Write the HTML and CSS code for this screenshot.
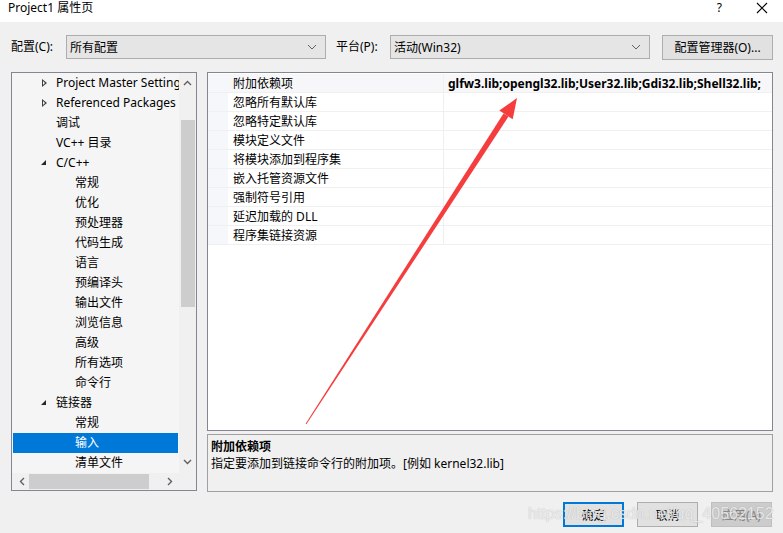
FILE: index.html
```html
<!DOCTYPE html>
<html lang="zh-CN">
<head>
    <meta charset="UTF-8">
    <title>Project1 属性页</title>
    <link rel="stylesheet" href="styles.css">
</head>
<body>
<div class="window">
    <div class="titlebar">
        <div class="title">Project1 属性页</div>
        <div class="title-buttons">
            <span class="help">?</span>
            <svg class="close" width="12" height="12" viewBox="0 0 12 12">
                <path d="M1 1 L11 11 M11 1 L1 11" stroke="#000" stroke-width="1.1" fill="none"/>
            </svg>
        </div>
    </div>

    <div class="toolbar">
        <label class="label label-config">配置(C):</label>
        <div class="select">
            <span>所有配置</span>
            <svg class="chevron" width="10" height="6" viewBox="0 0 10 6"><path d="M1 1 L5 5 L9 1" stroke="#606060" fill="none"/></svg>
        </div>
        <label class="label label-platform">平台(P):</label>
        <div class="select">
            <span>活动(Win32)</span>
            <svg class="chevron" width="10" height="6" viewBox="0 0 10 6"><path d="M1 1 L5 5 L9 1" stroke="#606060" fill="none"/></svg>
        </div>
        <div class="button manager">配置管理器(O)...</div>
    </div>

    <div class="main">
        <div class="tree">
            <div class="tree-body">
                <div class="tree-items">
                    <div class="node lvl1"><span class="twist closed"></span>Project Master Settings</div>
                    <div class="node lvl1"><span class="twist closed"></span>Referenced Packages</div>
                    <div class="node lvl1">调试</div>
                    <div class="node lvl1">VC++ 目录</div>
                    <div class="node lvl1"><span class="twist open"></span>C/C++</div>
                    <div class="node lvl2">常规</div>
                    <div class="node lvl2">优化</div>
                    <div class="node lvl2">预处理器</div>
                    <div class="node lvl2">代码生成</div>
                    <div class="node lvl2">语言</div>
                    <div class="node lvl2">预编译头</div>
                    <div class="node lvl2">输出文件</div>
                    <div class="node lvl2">浏览信息</div>
                    <div class="node lvl2">高级</div>
                    <div class="node lvl2">所有选项</div>
                    <div class="node lvl2">命令行</div>
                    <div class="node lvl1"><span class="twist open"></span>链接器</div>
                    <div class="node lvl2">常规</div>
                    <div class="node lvl2 selected">输入</div>
                    <div class="node lvl2">清单文件</div>
                </div>
                <div class="vscroll">
                    <svg class="arrow-up" width="9" height="6" viewBox="0 0 9 6"><path d="M1 5 L4.5 1.5 L8 5" stroke="#606060" stroke-width="1.4" fill="none"/></svg>
                    <div class="vthumb"></div>
                    <svg class="arrow-down" width="9" height="6" viewBox="0 0 9 6"><path d="M1 1 L4.5 4.5 L8 1" stroke="#606060" stroke-width="1.4" fill="none"/></svg>
                </div>
            </div>
            <div class="hscroll-row">
                <div class="hscroll">
                    <svg class="arrow-left" width="6" height="9" viewBox="0 0 6 9"><path d="M5 1 L1.5 4.5 L5 8" stroke="#606060" stroke-width="1.4" fill="none"/></svg>
                    <div class="hthumb"></div>
                    <svg class="arrow-right" width="6" height="9" viewBox="0 0 6 9"><path d="M1 1 L4.5 4.5 L1 8" stroke="#606060" stroke-width="1.4" fill="none"/></svg>
                </div>
                <div class="corner"></div>
            </div>
        </div>

        <div class="right">
            <div class="grid">
                <div class="prop current"><div class="gutter"></div><div class="name">附加依赖项</div><div class="value">glfw3.lib;opengl32.lib;User32.lib;Gdi32.lib;Shell32.lib;</div></div>
                <div class="prop"><div class="gutter"></div><div class="name">忽略所有默认库</div><div class="value"></div></div>
                <div class="prop"><div class="gutter"></div><div class="name">忽略特定默认库</div><div class="value"></div></div>
                <div class="prop"><div class="gutter"></div><div class="name">模块定义文件</div><div class="value"></div></div>
                <div class="prop"><div class="gutter"></div><div class="name">将模块添加到程序集</div><div class="value"></div></div>
                <div class="prop"><div class="gutter"></div><div class="name">嵌入托管资源文件</div><div class="value"></div></div>
                <div class="prop"><div class="gutter"></div><div class="name">强制符号引用</div><div class="value"></div></div>
                <div class="prop"><div class="gutter"></div><div class="name">延迟加载的 DLL</div><div class="value"></div></div>
                <div class="prop"><div class="gutter"></div><div class="name">程序集链接资源</div><div class="value"></div></div>
            </div>
            <div class="desc">
                <div class="desc-title">附加依赖项</div>
                <div class="desc-text">指定要添加到链接命令行的附加项。[例如 kernel32.lib]</div>
            </div>
        </div>
    </div>

    <div class="footer">
        <div class="button ok">确定</div>
        <div class="button">取消</div>
        <div class="button disabled">应用(A)</div>
    </div>

    <!-- 截图上的红色标注箭头 -->
    <svg class="annotation" width="783" height="533" viewBox="0 0 783 533">
        <polygon points="306.4,424.3 305.6,423.7 503.5,113.4 508.5,116.6" fill="#f53d3d"/>
        <polygon points="517,98 499.3,110.6 512.7,119.3" fill="#f53d3d"/>
    </svg>
    <div class="watermark">https://blog.csdn.net/qq_40562152</div>
</div>
</body>
</html>
```

FILE: styles.css
```css
* {
    margin: 0;
    padding: 0;
    box-sizing: border-box;
}

body {
    background: #f0f0f0;
    font-family: "Noto Sans", "Noto Sans CJK SC", sans-serif;
    font-size: 12px;
    color: #000;
}

.window {
    position: relative;
    width: 783px;
    height: 533px;
    overflow: hidden;
}

.titlebar {
    height: 22px;
    background: #ffffff;
    display: flex;
    justify-content: space-between;
    line-height: 16px;
}

.title {
    padding-left: 8px;
    font-size: 12px;
}

.title-buttons {
    display: flex;
    align-items: flex-start;
    padding-right: 15px;
}

.help {
    margin-right: 34px;
    font-size: 12px;
}

.close {
    margin-top: 2px;
}

.toolbar {
    height: 50px;
    display: flex;
    align-items: center;
    padding-left: 11px;
}

.label {
    line-height: 24px;
}

.label-config {
    width: 55px;
}

.label-platform {
    width: 54px;
    margin-left: 10px;
}

.select {
    width: 260px;
    height: 24px;
    border: 1px solid #adadad;
    background: #e5e5e5;
    display: flex;
    align-items: center;
    justify-content: space-between;
    padding: 0 8px 0 3px;
}

.button {
    height: 25px;
    border: 1px solid #adadad;
    background: #e1e1e1;
    display: flex;
    align-items: center;
    justify-content: center;
}

.manager {
    width: 111px;
    margin-left: 12px;
}

.main {
    display: flex;
    padding-left: 11px;
    height: 420px;
}

.tree {
    width: 186px;
    height: 419px;
    border: 1px solid #828790;
    display: flex;
    flex-direction: column;
    background: #f0f0f0;
}

.tree-body {
    flex: 1;
    display: flex;
    overflow: hidden;
}

.tree-items {
    width: 167px;
    background: #f5f5f5;
    overflow: hidden;
}

.node {
    height: 20px;
    line-height: 20px;
    white-space: nowrap;
    overflow: hidden;
    position: relative;
}

.lvl1 {
    padding-left: 44px;
}

.lvl2 {
    padding-left: 63px;
}

.node.selected {
    background: #0078d7;
    color: #ffffff;
    margin-left: 1px;
    width: 165px;
    padding-left: 62px;
}

.twist {
    position: absolute;
    left: 30px;
    top: 6px;
    width: 0;
    height: 0;
}

.twist.closed {
    border-top: 4px solid transparent;
    border-bottom: 4px solid transparent;
    border-left: 5px solid #404040;
}

.twist.closed::after {
    content: "";
    position: absolute;
    left: -4px;
    top: -2px;
    border-top: 2px solid transparent;
    border-bottom: 2px solid transparent;
    border-left: 2.5px solid #f5f5f5;
}

.twist.open {
    top: 7px;
    left: 29px;
    border-left: 5px solid transparent;
    border-bottom: 5px solid #262626;
}

.vscroll {
    width: 17px;
    display: flex;
    flex-direction: column;
    align-items: center;
    background: #f0f0f0;
}

.arrow-up {
    margin-top: 7px;
}

.vthumb {
    width: 14px;
    height: 187px;
    background: #cdcdcd;
    margin-top: 34px;
}

.arrow-down {
    margin-top: 152px;
}

.hscroll-row {
    height: 17px;
    display: flex;
}

.hscroll {
    width: 167px;
    display: flex;
    align-items: center;
    padding-left: 7px;
}

.hthumb {
    width: 120px;
    height: 15px;
    background: #cdcdcd;
    margin-left: 4px;
}

.arrow-right {
    margin-left: 18px;
}

.corner {
    flex: 1;
}

.right {
    margin-left: 10px;
    width: 566px;
    display: flex;
    flex-direction: column;
}

.grid {
    height: 359px;
    border: 1px solid #828790;
    background: #ffffff;
    padding-top: 1px;
    display: flex;
    flex-direction: column;
}

.prop {
    height: 19px;
    display: flex;
    line-height: 18px;
    padding-top: 1px;
    border-bottom: 1px solid #f0f0f0;
}

.prop:first-child {
    padding-top: 0;
    line-height: 19px;
}

.gutter {
    width: 20px;
    background: #f5f7fa;
    margin-top: -1px;
}

.prop:first-child .gutter {
    margin-top: 0;
}

.name {
    width: 215px;
    padding-left: 5px;
    white-space: nowrap;
}

.value {
    flex: 1;
    padding-left: 4px;
    border-left: 1px solid #f0f0f0;
    margin-top: -1px;
    padding-top: 1px;
    font-weight: bold;
    white-space: nowrap;
    overflow: hidden;
}

.prop:first-child .value {
    margin-top: 0;
    padding-top: 0;
}

.prop.current .name,
.prop.current .value {
    background: #f7f7f9;
}

.desc {
    margin-top: 3px;
    height: 58px;
    border: 1px solid #a0a0a0;
    background: #f0f0f0;
    padding: 3px 3px;
    line-height: 17px;
}

.desc-title {
    font-weight: bold;
}

.footer {
    display: flex;
    justify-content: flex-end;
    gap: 13px;
    padding: 10px 11px 0 0;
}

.footer .button {
    width: 61px;
}

.button.ok {
    border: 2px solid #0078d7;
}

.button.disabled {
    background: #cccccc;
    border-color: #bfbfbf;
    color: #838383;
}

.annotation {
    position: absolute;
    left: 0;
    top: 0;
    pointer-events: none;
}

.watermark {
    position: absolute;
    left: 528px;
    top: 505px;
    font-family: "Liberation Sans", sans-serif;
    font-size: 16px;
    color: rgba(255, 255, 255, 0.75);
    text-shadow: 0 0 1px rgba(120, 120, 120, 0.6);
    white-space: nowrap;
    pointer-events: none;
}
```
